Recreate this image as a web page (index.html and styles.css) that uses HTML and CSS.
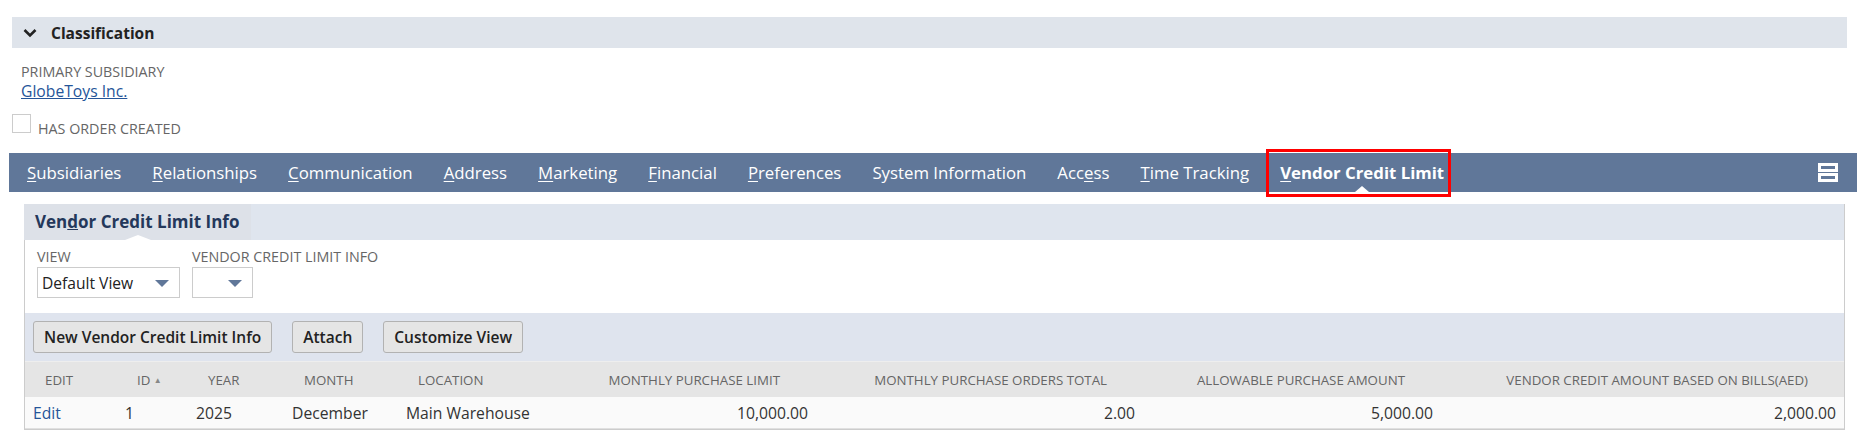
FILE: index.html
```html
<!DOCTYPE html>
<html>
<head>
<meta charset="utf-8">
<link rel="stylesheet" href="styles.css">
</head>
<body>
<div class="section-head">
  <svg class="chev" width="14" height="10" viewBox="0 0 14 10"><path d="M1.5 2 L7 7.5 L12.5 2" fill="none" stroke="#222" stroke-width="2.6"/></svg>
  <span>Classification</span>
</div>
<div class="fields">
  <div class="field">
    <div class="flabel">PRIMARY SUBSIDIARY</div>
    <a class="flink" href="#">GlobeToys Inc.</a>
  </div>
  <div class="checkfield">
    <span class="cbox"></span>
    <span class="flabel">HAS ORDER CREATED</span>
  </div>
</div>
<nav class="tabs">
  <div class="tab"><u>S</u>ubsidiaries</div>
  <div class="tab"><u>R</u>elationships</div>
  <div class="tab"><u>C</u>ommunication</div>
  <div class="tab"><u>A</u>ddress</div>
  <div class="tab"><u>M</u>arketing</div>
  <div class="tab"><u>F</u>inancial</div>
  <div class="tab"><u>P</u>references</div>
  <div class="tab">System Information</div>
  <div class="tab">Acc<u>e</u>ss</div>
  <div class="tab"><u>T</u>ime Tracking</div>
  <div class="tab active"><u>V</u>endor Credit Limit</div>
  <div class="spacer"></div>
  <svg class="menu-icon" width="20" height="19" viewBox="0 0 20 19"><rect x="1.5" y="1.5" width="17" height="6" fill="none" stroke="#fff" stroke-width="3"/><rect x="1.5" y="11.5" width="17" height="6" fill="none" stroke="#fff" stroke-width="3"/></svg>
</nav>
<div class="panel">
  <div class="subtabs">
    <div class="subtab">Ven<u>d</u>or Credit Limit Info</div>
  </div>
  <div class="filters">
    <div class="filter">
      <div class="flabel">VIEW</div>
      <div class="select wide"><span>Default View</span><i class="caret"></i></div>
    </div>
    <div class="filter">
      <div class="flabel">VENDOR CREDIT LIMIT INFO</div>
      <div class="select narrow"><span></span><i class="caret"></i></div>
    </div>
  </div>
  <div class="buttons">
    <button class="btn">New Vendor Credit Limit Info</button>
    <button class="btn">Attach</button>
    <button class="btn">Customize View</button>
  </div>
  <table class="grid">
    <colgroup>
      <col style="width:92px"><col style="width:71px"><col style="width:96px"><col style="width:114px"><col style="width:202px"><col style="width:216px"><col style="width:327px"><col style="width:298px"><col>
    </colgroup>
    <thead>
      <tr>
        <th>EDIT</th>
        <th>ID <span class="sort">&#9650;</span></th>
        <th>YEAR</th>
        <th>MONTH</th>
        <th>LOCATION</th>
        <th class="num">MONTHLY PURCHASE LIMIT</th>
        <th class="num">MONTHLY PURCHASE ORDERS TOTAL</th>
        <th class="num">ALLOWABLE PURCHASE AMOUNT</th>
        <th class="num">VENDOR CREDIT AMOUNT BASED ON BILLS(AED)</th>
      </tr>
    </thead>
    <tbody>
      <tr>
        <td><a href="#" class="edit">Edit</a></td>
        <td>1</td>
        <td>2025</td>
        <td>December</td>
        <td>Main Warehouse</td>
        <td class="num">10,000.00</td>
        <td class="num">2.00</td>
        <td class="num">5,000.00</td>
        <td class="num">2,000.00</td>
      </tr>
    </tbody>
  </table>
</div>
</body>
</html>
```

FILE: styles.css
```css
html, body {
  margin: 0;
  padding: 0;
  background: #fff;
  font-family: "Open Sans", "Liberation Sans", sans-serif;
  color: #333;
}

.section-head {
  margin: 17px 16px 0 12px;
  height: 31px;
  background: #dfe4eb;
  display: flex;
  align-items: center;
  font-size: 15.5px;
  font-weight: 700;
  color: #222;
}
.section-head .chev {
  margin: 1px 14px 0 11px;
}

.fields {
  padding: 15px 0 0 21px;
}
.flabel {
  font-size: 14.3px;
  color: #666;
  line-height: 17px;
}
.flink {
  display: inline-block;
  font-size: 15.7px;
  line-height: 23px;
  color: #255599;
  text-decoration: underline;
}
.checkfield {
  display: flex;
  align-items: flex-start;
  margin: 11px 0 0 -9px;
}
.cbox {
  width: 17px;
  height: 17px;
  border: 1px solid #ccc;
  background: #fff;
  margin-right: 7px;
}
.checkfield .flabel {
  margin-top: 6px;
}

.tabs {
  margin: 16px 6px 0 9px;
  padding-left: 2px;
  height: 39px;
  background: #607799;
  display: flex;
  align-items: center;
}
.tab {
  padding: 0 15px 0 16px;
  font-size: 16.8px;
  color: #fff;
  white-space: nowrap;
  height: 39px;
  line-height: 39px;
  position: relative;
}
.tab u {
  text-decoration-thickness: 1px;
  text-underline-offset: 2px;
}
.tab.active {
  font-weight: 700;
}
.tab.active::before {
  content: "";
  position: absolute;
  left: 50%;
  bottom: 0;
  margin-left: -7px;
  border-left: 7px solid transparent;
  border-right: 7px solid transparent;
  border-bottom: 6px solid #fff;
}
.tab.active::after {
  content: "";
  position: absolute;
  left: 2px;
  right: 8px;
  top: -4px;
  bottom: -5px;
  border: 3px solid #f00;
}
.spacer { flex: 1; }
.menu-icon {
  margin-right: 19px;
}

.panel {
  margin: 12px 18px 0 24px;
  border-left: 1px solid #ccc;
  border-right: 1px solid #ccc;
  border-bottom: 1px solid #ccc;
}
.subtabs {
  background: #dfe5ee;
  height: 36px;
  display: flex;
}
.subtab {
  background: #dde1e8;
  padding: 0 12px 0 11px;
  width: 204px;
  font-size: 17px;
  font-weight: 700;
  color: #24385b;
  line-height: 36px;
  position: relative;
  margin-left: -1px;
  white-space: nowrap;
}
.subtab::after {
  content: "";
  position: absolute;
  left: 50%;
  bottom: 0;
  margin-left: -13px;
  border-left: 13px solid transparent;
  border-right: 13px solid transparent;
  border-bottom: 5px solid #fff;
}
.filters {
  display: flex;
  gap: 12px;
  padding: 8px 0 15px 12px;
  background: #fff;
}
.select {
  margin-top: 2px;
  height: 29px;
  border: 1px solid #ccc;
  display: flex;
  align-items: center;
  justify-content: space-between;
  padding: 0 10px 0 4px;
  font-size: 15.6px;
  color: #222;
  background: #fff;
}
.select.wide { width: 127px; }
.select.narrow { width: 45px; }
.caret {
  width: 0;
  height: 0;
  border-left: 7px solid transparent;
  border-right: 7px solid transparent;
  border-top: 7px solid #607799;
  margin-top: 1px;
}
.buttons {
  background: #dfe4ee;
  padding: 8px 0 8px 8px;
  display: flex;
  gap: 20px;
}
.btn {
  font-family: "Open Sans", "Liberation Sans", sans-serif;
  height: 32px;
  padding: 0 10px;
  background: #e5e5e5;
  border: 1px solid #b2b2b2;
  border-radius: 3px;
  font-size: 15.5px;
  font-weight: 600;
  color: #222;
}
.grid {
  width: 100%;
  border-collapse: collapse;
  table-layout: fixed;
}
.grid th {
  background: #e5e5e5;
  height: 35px;
  font-size: 13.3px;
  font-weight: 400;
  color: #666;
  text-align: left;
  padding: 0 0 0 20px;
  white-space: nowrap;
  border-top: 1px solid #eee;
}
.grid th.num {
  text-align: right;
  padding: 0 36px 0 0;
}
.sort {
  font-size: 8px;
  color: #888;
  vertical-align: 2px;
}
.grid td {
  background: #fafafa;
  height: 31px;
  font-size: 15.7px;
  color: #333;
  padding: 0 0 0 8px;
  white-space: nowrap;
  border-bottom: 1px solid #e0e0e0;
}
.grid td.num {
  text-align: right;
  padding: 0 8px 0 0;
}
.edit {
  color: #255599;
  text-decoration: none;
}
```
